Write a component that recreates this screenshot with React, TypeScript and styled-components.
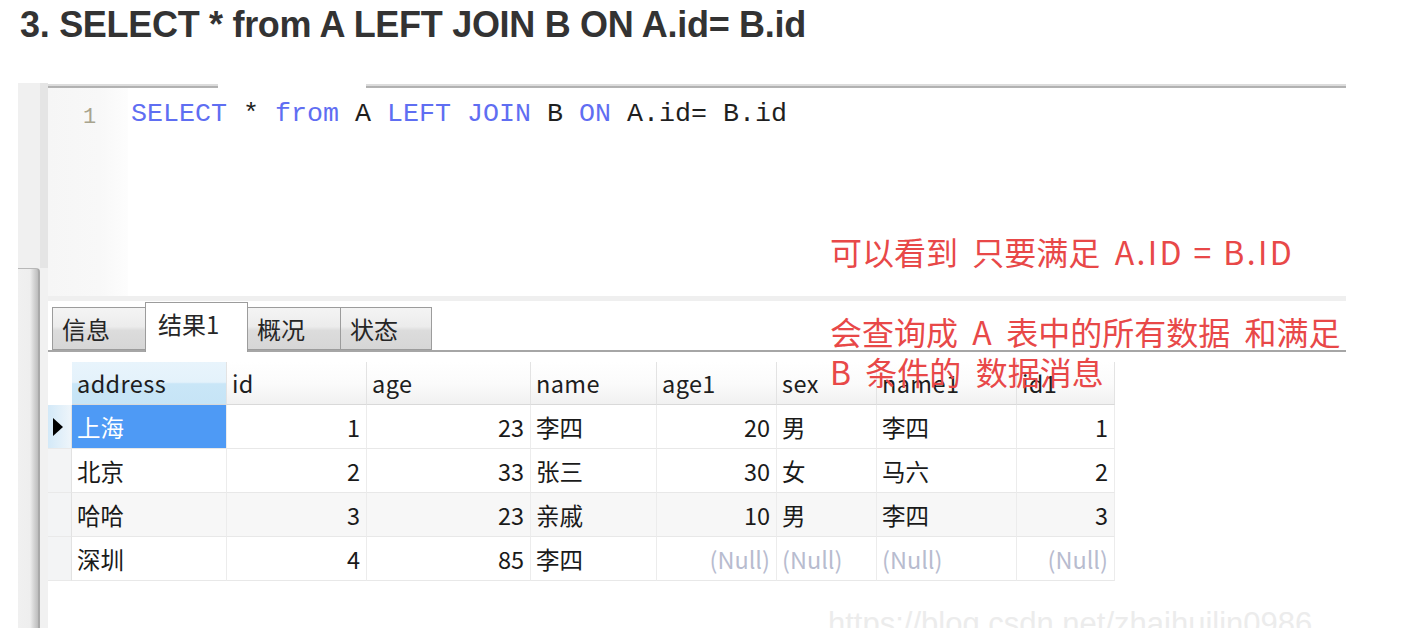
import React from "react";
import styled, { createGlobalStyle } from "styled-components";

const GlobalStyle = createGlobalStyle`
  html, body { margin: 0; padding: 0; background: #ffffff; }
  body { font-family: "Liberation Sans", Arial, sans-serif; overflow: hidden; }
  * { box-sizing: border-box; }
`;

const Page = styled.div`
  width: 1418px;
  height: 628px;
  overflow: hidden;
  display: flex;
  flex-direction: column;
`;

const Title = styled.h3`
  margin: 0;
  height: 83px;
  padding: 3px 0 0 20px;
  font-family: "Liberation Sans", Arial, sans-serif;
  font-weight: 700;
  font-size: 36px;
  line-height: 44px;
  letter-spacing: -0.3px;
  color: #333333;
`;

const Shot = styled.div`
  position: relative;
  margin-left: 18px;
  width: 1328px;
  flex: 1;
  display: flex;
  overflow: hidden;
`;

const Frame = styled.div`
  width: 30px;
  display: flex;
  flex-direction: column;
`;

const FrameTop = styled.div`
  height: 185px;
  background: linear-gradient(to right, #f0f0f0 0, #f0f0f0 22px, #e5e5e5 22px, #e5e5e5 100%);
`;

const FrameLower = styled.div`
  flex: 1;
  display: flex;
  background: #f1f1f1;
`;

const Thumb = styled.div`
  width: 22px;
  border-top: 1px solid #b8b8b8;
  border-right: 2px solid #a9a9a9;
  border-top-right-radius: 4px;
  background: linear-gradient(to right, #f0f0f0 0, #eeeeee 60%, #d4d4d4 80%, #bdbdbd 100%);
`;

const Main = styled.div`
  flex: 1;
  display: flex;
  flex-direction: column;
  background: #ffffff;
`;

const TopRule = styled.div`
  height: 5px;
  display: flex;
  align-items: flex-end;
`;

const RuleSeg = styled.div<{ $w?: number; $gap?: boolean }>`
  height: 4px;
  ${(p) => (p.$w ? `width: ${p.$w}px;` : "flex: 1;")}
  background: ${(p) => (p.$gap ? "#ffffff" : "linear-gradient(#dcdcdc 0, #dcdcdc 40%, #aeaeae 40%, #b4b4b4 100%)")};
`;

const Editor = styled.div`
  height: 208px;
  display: flex;
`;

const Gutter = styled.div`
  width: 80px;
  padding: 18px 0 0 35px;
  background: linear-gradient(to right, #f6f6f6 0, #f8f8f8 65%, #fdfdfd 100%);
  font-family: "Liberation Mono", "Courier New", monospace;
  font-size: 22px;
  line-height: 24px;
  color: #a8a48e;
`;

const Code = styled.div`
  flex: 1;
  padding: 10px 0 0 3px;
  font-family: "Liberation Mono", "Courier New", monospace;
  font-size: 26.67px;
  line-height: 32px;
  white-space: pre;
  color: #1f1f1f;
`;

const Kw = styled.span`
  color: #5f6ef2;
`;

const Divider = styled.div`
  height: 5px;
  background: #efefef;
`;

const TabBar = styled.div`
  height: 51px;
  display: flex;
  align-items: flex-end;
  padding-left: 4px;
  border-bottom: 2px solid #a6a6a6;
`;

const Tab = styled.div<{ $w: number; $active?: boolean }>`
  width: ${(p) => p.$w}px;
  height: ${(p) => (p.$active ? 50 : 43)}px;
  margin-bottom: ${(p) => (p.$active ? -2 : 0)}px;
  margin-right: -1px;
  position: relative;
  z-index: ${(p) => (p.$active ? 1 : 0)};
  border: 1px solid #9c9c9c;
  border-bottom: ${(p) => (p.$active ? "none" : "1px solid #9c9c9c")};
  background: ${(p) =>
    p.$active ? "#ffffff" : "linear-gradient(#f4f4f4 0, #ececec 45%, #dcdcdc 55%, #d6d6d6 100%)"};
  padding: ${(p) => (p.$active ? "5px 0 0 12px" : "5px 0 0 9px")};
  font-family: "Noto Sans CJK SC", "Liberation Sans", sans-serif;
  font-size: 24px;
  line-height: 32px;
  color: #262626;
`;

const Grid = styled.div`
  margin-top: 10px;
  display: flex;
  flex-direction: column;
  width: 1067px;
`;

const cols = "24px 155px 140px 164px 126px 120px 100px 140px 98px";

const Row = styled.div<{ $head?: boolean; $alt?: boolean }>`
  display: grid;
  grid-template-columns: ${cols};
  height: ${(p) => (p.$head ? 43 : 44)}px;
  background: ${(p) => (p.$alt ? "#f7f7f7" : "#ffffff")};
  font-family: "Noto Sans CJK SC", "Liberation Sans", sans-serif;
  font-size: 23.5px;
`;

const Indicator = styled.div<{ $head?: boolean; $current?: boolean }>`
  display: flex;
  align-items: center;
  padding-left: 5px;
  background: ${(p) =>
    p.$head ? "#ffffff" : p.$current ? "linear-gradient(to right, #d3e9f8 0, #eef5fa 100%)" : "#f3f4f5"};
  border-bottom: ${(p) => (p.$head ? "1px solid #ffffff" : "1px solid #e9e9e9")};
  border-right: ${(p) => (p.$head ? "none" : "1px solid #e2e2e2")};
`;

const Arrow = styled.span`
  width: 0;
  height: 0;
  border-top: 9px solid transparent;
  border-bottom: 9px solid transparent;
  border-left: 10px solid #000000;
`;

const HeadCell = styled.div<{ $sel?: boolean }>`
  display: flex;
  align-items: center;
  padding-left: 5px;
  letter-spacing: 0.4px;
  color: #1e1e1e;
  border-right: 1px solid #e3e3e3;
  border-bottom: 1px solid #d9d9d9;
  background: ${(p) =>
    p.$sel
      ? "linear-gradient(#e8f4fc 0, #e4f2fb 48%, #c9e6f7 52%, #c6e4f6 100%)"
      : "linear-gradient(#ffffff 0, #fbfbfb 50%, #f1f1f1 100%)"};
`;

const Cell = styled.div<{ $right?: boolean; $null?: boolean; $sel?: boolean }>`
  display: flex;
  align-items: center;
  justify-content: ${(p) => (p.$right ? "flex-end" : "flex-start")};
  padding: 0 6px 0 5px;
  color: ${(p) => (p.$sel ? "#ffffff" : p.$null ? "#b8bccf" : "#1a1a1a")};
  background: ${(p) => (p.$sel ? "#4e9af5" : "transparent")};
  border-right: 1px solid #ececec;
  border-bottom: 1px solid #e8e8e8;
`;

const Note = styled.div`
  position: absolute;
  left: 812px;
  top: 148px;
  font-family: "Noto Sans CJK SC", "Liberation Sans", sans-serif;
  font-size: 32px;
  line-height: 40px;
  color: #e84848;
  white-space: pre;
  pointer-events: none;
`;

const Latin = styled.span`
  letter-spacing: 2.4px;
`;

const Watermark = styled.div`
  position: absolute;
  left: 810px;
  top: 525px;
  font-family: "Liberation Sans", Arial, sans-serif;
  font-size: 31px;
  line-height: 32px;
  color: #ececec;
  white-space: nowrap;
`;

type Val = { t: string; right?: boolean; nul?: boolean };

const headers = ["address", "id", "age", "name", "age1", "sex", "name1", "id1"];

const rows: Val[][] = [
  [{ t: "上海" }, { t: "1", right: true }, { t: "23", right: true }, { t: "李四" }, { t: "20", right: true }, { t: "男" }, { t: "李四" }, { t: "1", right: true }],
  [{ t: "北京" }, { t: "2", right: true }, { t: "33", right: true }, { t: "张三" }, { t: "30", right: true }, { t: "女" }, { t: "马六" }, { t: "2", right: true }],
  [{ t: "哈哈" }, { t: "3", right: true }, { t: "23", right: true }, { t: "亲戚" }, { t: "10", right: true }, { t: "男" }, { t: "李四" }, { t: "3", right: true }],
  [{ t: "深圳" }, { t: "4", right: true }, { t: "85", right: true }, { t: "李四" }, { t: "(Null)", right: true, nul: true }, { t: "(Null)", nul: true }, { t: "(Null)", nul: true }, { t: "(Null)", right: true, nul: true }],
];

const tabs = [
  { label: "信息", w: 94 },
  { label: "结果1", w: 103, active: true },
  { label: "概况", w: 94 },
  { label: "状态", w: 92 },
];

export default function App() {
  return (
    <>
      <GlobalStyle />
      <Page>
        <Title>3. SELECT * from A LEFT JOIN B ON A.id= B.id</Title>
        <Shot>
          <Frame>
            <FrameTop />
            <FrameLower>
              <Thumb />
            </FrameLower>
          </Frame>
          <Main>
            <TopRule>
              <RuleSeg $w={170} />
              <RuleSeg $w={148} $gap />
              <RuleSeg />
            </TopRule>
            <Editor>
              <Gutter>1</Gutter>
              <Code>
                <Kw>SELECT</Kw> * <Kw>from</Kw> A <Kw>LEFT</Kw> <Kw>JOIN</Kw> B <Kw>ON</Kw> A.id= B.id
              </Code>
            </Editor>
            <Divider />
            <TabBar>
              {tabs.map((t) => (
                <Tab key={t.label} $w={t.w} $active={t.active}>
                  {t.label}
                </Tab>
              ))}
            </TabBar>
            <Grid>
              <Row $head>
                <Indicator $head />
                {headers.map((h, i) => (
                  <HeadCell key={h} $sel={i === 0}>
                    {h}
                  </HeadCell>
                ))}
              </Row>
              {rows.map((r, ri) => (
                <Row key={ri} $alt={ri === 2}>
                  <Indicator $current={ri === 0}>{ri === 0 && <Arrow />}</Indicator>
                  {r.map((v, ci) => (
                    <Cell key={ci} $right={v.right} $null={v.nul} $sel={ri === 0 && ci === 0}>
                      {v.t}
                    </Cell>
                  ))}
                </Row>
              ))}
            </Grid>
          </Main>
          <Note>
            {"可以看到  只要满足  "}
            <Latin>A.ID = B.ID</Latin>
            {"\n\n会查询成  A  表中的所有数据  和满足\nB  条件的  数据消息"}
          </Note>
          <Watermark>https://blog.csdn.net/zhaihuilin0986</Watermark>
        </Shot>
      </Page>
    </>
  );
}
